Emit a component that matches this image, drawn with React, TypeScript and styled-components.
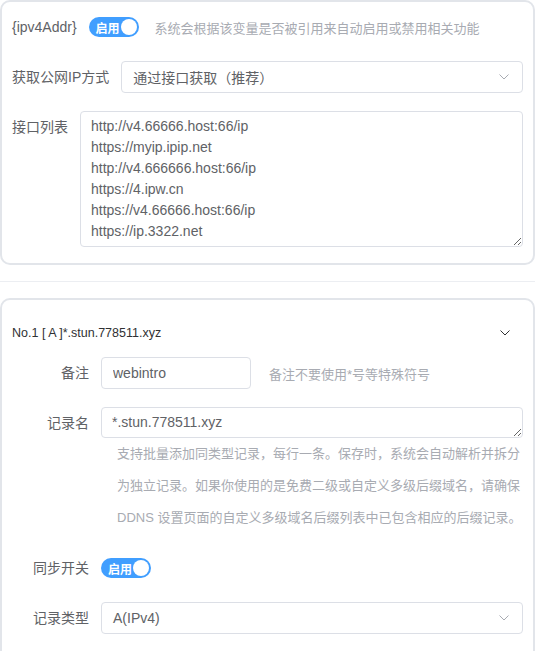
import React from 'react'
import styled, { createGlobalStyle } from 'styled-components'

const GlobalStyle = createGlobalStyle`
  html, body {
    margin: 0;
    padding: 0;
    background: #fff;
  }
  body {
    font-family: 'Liberation Sans', 'Noto Sans CJK SC', sans-serif;
    color: #606266;
  }
  * {
    box-sizing: border-box;
  }
`

const Card = styled.section<{ $bottom?: number }>`
  border: 2px solid #e2e5ea;
  border-radius: 10px;
  padding: 9px 10px ${(p) => p.$bottom ?? 16}px;
`

const Divider = styled.div`
  height: 1px;
  background: #eceef2;
  margin: 16px 0;
`

const Row = styled.div`
  display: flex;
  align-items: flex-start;
  margin-bottom: 18px;

  &:last-child {
    margin-bottom: 0;
  }
`

const Label = styled.label<{ $width?: number }>`
  flex: none;
  width: ${(p) => (p.$width ? `${p.$width}px` : 'auto')};
  padding-right: 12px;
  text-align: ${(p) => (p.$width ? 'right' : 'left')};
  font-size: 14px;
  line-height: 32px;
  color: #606266;
  white-space: nowrap;
`

const Field = styled.div`
  flex: 1;
  min-width: 0;
  min-height: 32px;
  display: flex;
  align-items: center;
  flex-wrap: wrap;
`

const Hint = styled.span<{ $gap?: number }>`
  margin-left: ${(p) => p.$gap ?? 16}px;
  font-size: 13px;
  color: #a8abb2;
`

const SwitchTrack = styled.span`
  position: relative;
  display: inline-flex;
  align-items: center;
  width: 50px;
  height: 20px;
  border-radius: 10px;
  background: #409eff;
  color: #fff;
  font-size: 12px;
  font-weight: 600;
  padding-left: 7px;

  &::after {
    content: '';
    position: absolute;
    right: 2px;
    top: 2px;
    width: 16px;
    height: 16px;
    border-radius: 50%;
    background: #fff;
  }
`

const SelectBox = styled.div`
  flex: 1;
  height: 32px;
  border: 1px solid #dcdfe6;
  border-radius: 4px;
  padding: 0 13px 0 11px;
  display: flex;
  align-items: center;
  justify-content: space-between;
  font-size: 14px;
  color: #606266;
`

const Input = styled.input<{ $width?: number }>`
  width: ${(p) => (p.$width ? `${p.$width}px` : '100%')};
  height: 32px;
  border: 1px solid #dcdfe6;
  border-radius: 4px;
  padding: 0 11px;
  font: inherit;
  font-size: 14px;
  color: #606266;
  outline: none;
`

const TextArea = styled.textarea<{ $rows: number }>`
  display: block;
  width: 100%;
  height: ${(p) => p.$rows * 21 + 10}px;
  border: 1px solid #dcdfe6;
  border-radius: 4px;
  padding: 4px 10px;
  font: inherit;
  font-size: 14px;
  line-height: 21px;
  color: #606266;
  resize: vertical;
  outline: none;
  overflow: hidden;
`

const HelpText = styled.p`
  margin: 0;
  width: 100%;
  padding: 0 0 0 16px;
  font-size: 13px;
  line-height: 32px;
  color: #a8abb2;
`

const CollapseHeader = styled.div`
  height: 48px;
  display: flex;
  align-items: center;
  justify-content: space-between;
  padding: 0 13px 0 0;
  font-size: 12.5px;
  color: #303133;
`

function Chevron({ color = '#a8abb2' }: { color?: string }) {
  return (
    <svg width='10' height='6' viewBox='0 0 10 6' fill='none'>
      <path d='M0.5 0.5 L5 5 L9.5 0.5' stroke={color} strokeWidth='1' />
    </svg>
  )
}

function Switch() {
  return <SwitchTrack>启用</SwitchTrack>
}

const apis = [
  'http://v4.66666.host:66/ip',
  'https://myip.ipip.net',
  'http://v4.666666.host:66/ip',
  'https://4.ipw.cn',
  'https://v4.66666.host:66/ip',
  'https://ip.3322.net',
]

export default function App() {
  return (
    <>
      <GlobalStyle />
      <Card>
        <Row>
          <Label>{'{ipv4Addr}'}</Label>
          <Field>
            <Switch />
            <Hint>系统会根据该变量是否被引用来自动启用或禁用相关功能</Hint>
          </Field>
        </Row>
        <Row>
          <Label>获取公网IP方式</Label>
          <Field>
            <SelectBox>
              <span>通过接口获取（推荐）</span>
              <Chevron />
            </SelectBox>
          </Field>
        </Row>
        <Row>
          <Label>接口列表</Label>
          <Field>
            <TextArea $rows={6} readOnly value={apis.join('\n')} />
          </Field>
        </Row>
      </Card>

      <Divider />

      <Card $bottom={30}>
        <CollapseHeader>
          <span>No.1 [ A ]*.stun.778511.xyz</span>
          <Chevron color='#303133' />
        </CollapseHeader>
        <Row>
          <Label $width={89}>备注</Label>
          <Field>
            <Input $width={150} readOnly value='webintro' />
            <Hint $gap={18}>备注不要使用*号等特殊符号</Hint>
          </Field>
        </Row>
        <Row>
          <Label $width={89}>记录名</Label>
          <Field>
            <TextArea $rows={1} readOnly value='*.stun.778511.xyz' />
            <HelpText>
              支持批量添加同类型记录，每行一条。保存时，系统会自动解析并拆分为独立记录。如果你使用的是免费二级或自定义多级后缀域名，请确保
              DDNS 设置页面的自定义多级域名后缀列表中已包含相应的后缀记录。
            </HelpText>
          </Field>
        </Row>
        <Row>
          <Label $width={89}>同步开关</Label>
          <Field>
            <Switch />
          </Field>
        </Row>
        <Row>
          <Label $width={89}>记录类型</Label>
          <Field>
            <SelectBox>
              <span>A(IPv4)</span>
              <Chevron />
            </SelectBox>
          </Field>
        </Row>
      </Card>
    </>
  )
}
